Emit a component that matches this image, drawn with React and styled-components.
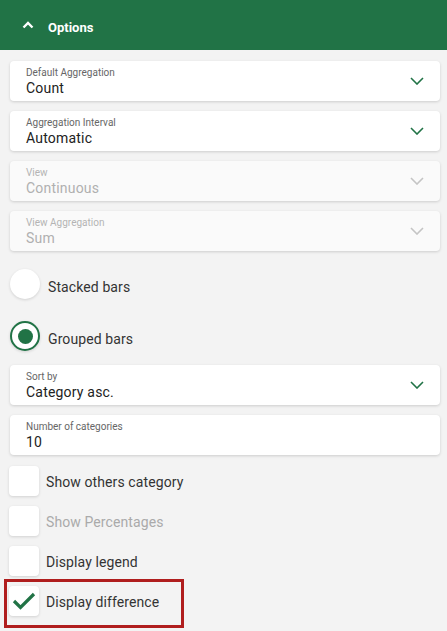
import React from 'react'
import styled, { createGlobalStyle } from 'styled-components'

const GlobalStyle = createGlobalStyle`
    html, body {
        margin: 0;
        padding: 0;
        background: #f3f3f3;
        font-family: Roboto, "Liberation Sans", sans-serif;
    }
`

const green = '#217346'

const selects = [
    { label: 'Default Aggregation', value: 'Count' },
    { label: 'Aggregation Interval', value: 'Automatic' },
    { label: 'View', value: 'Continuous', disabled: true },
    { label: 'View Aggregation', value: 'Sum', disabled: true }
]

const checks = [
    { label: 'Show others category' },
    { label: 'Show Percentages', disabled: true },
    { label: 'Display legend' },
    { label: 'Display difference', checked: true, highlight: true }
]

const ChevronDown = ({ color }) => (
    <svg width="14" height="8" viewBox="0 0 14 8">
        <path d="M1 1 L7 7 L13 1" fill="none" stroke={color} strokeWidth="1.6" />
    </svg>
)

const Select = ({ label, value, disabled, noArrow }) => (
    <Field disabled={disabled}>
        <FieldText>
            <FieldLabel disabled={disabled}>{label}</FieldLabel>
            <FieldValue disabled={disabled}>{value}</FieldValue>
        </FieldText>
        {!noArrow && <ChevronDown color={disabled ? '#c4c4c4' : green} />}
    </Field>
)

export default function App() {
    return (
        <Panel>
            <GlobalStyle />
            <Header>
                <svg width="12" height="8" viewBox="0 0 12 8">
                    <path d="M1.5 6.5 L6 2 L10.5 6.5" fill="none" stroke="#fff" strokeWidth="2.4" />
                </svg>
                <Title>Options</Title>
            </Header>
            <Body>
                <FieldGroup>
                    {selects.map((s) =>
                        <Select key={s.label} {...s} />
                    )}
                </FieldGroup>
                <RadioGroup>
                    <RadioRow>
                        <Radio />
                        <OptionText lower>Stacked bars</OptionText>
                    </RadioRow>
                    <RadioRow>
                        <Radio checked><RadioDot /></Radio>
                        <OptionText lower>Grouped bars</OptionText>
                    </RadioRow>
                </RadioGroup>
                <FieldGroup>
                    <Select label="Sort by" value="Category asc." />
                    <Select label="Number of categories" value="10" noArrow />
                </FieldGroup>
                <CheckGroup>
                    {checks.map((c) =>
                        <CheckRow key={c.label}>
                            <CheckBox>
                                {c.checked &&
                                    <svg width="24" height="20" viewBox="0 0 24 20">
                                        <path d="M2 10 L8.5 16.5 L22 3" fill="none" stroke={green} strokeWidth="3.2" />
                                    </svg>}
                            </CheckBox>
                            <OptionText disabled={c.disabled}>{c.label}</OptionText>
                            {c.highlight && <Highlight />}
                        </CheckRow>
                    )}
                </CheckGroup>
            </Body>
        </Panel>
    )
}

const Panel = styled.div`
    width: 447px;
    min-height: 631px;
    background: #f3f3f3;
`
const Header = styled.div`
    height: 50px;
    background: ${green};
    display: flex;
    align-items: center;
    padding-left: 22px;
    gap: 14px;
    box-sizing: border-box;
`
const Title = styled.div`
    color: #fff;
    font-weight: 700;
    font-size: 13px;
    padding-top: 4px;
`
const Body = styled.div`
    padding: 11px 7px 0 10px;
    display: flex;
    flex-direction: column;
`
const FieldGroup = styled.div`
    display: flex;
    flex-direction: column;
    gap: 10px;
`
const Field = styled.div`
    height: 40px;
    box-sizing: border-box;
    background: ${p => p.disabled ? '#fafafa' : '#fff'};
    border-radius: 4px;
    box-shadow: 0 1px 3px rgba(0,0,0,.16);
    display: flex;
    align-items: center;
    padding: 0 16px 0 16px;
`
const FieldText = styled.div`
    flex: 1;
    display: flex;
    flex-direction: column;
    padding-top: 1px;
`
const FieldLabel = styled.div`
    font-size: 10px;
    line-height: 13px;
    color: ${p => p.disabled ? '#b4b4b4' : '#666'};
`
const FieldValue = styled.div`
    font-size: 14px;
    line-height: 18px;
    color: ${p => p.disabled ? '#b0b0b0' : '#222'};
    letter-spacing: .2px;
`
const RadioGroup = styled.div`
    margin: 7px 0 3px;
    display: flex;
    flex-direction: column;
`
const RadioRow = styled.div`
    height: 52px;
    display: flex;
    align-items: center;
    gap: 8px;
`
const Radio = styled.div`
    width: 30px;
    height: 30px;
    box-sizing: border-box;
    border-radius: 50%;
    background: #fff;
    box-shadow: 0 1px 3px rgba(0,0,0,.14);
    border: ${p => p.checked ? `2px solid ${green}` : 'none'};
    display: flex;
    align-items: center;
    justify-content: center;
`
const RadioDot = styled.div`
    width: 15px;
    height: 15px;
    border-radius: 50%;
    background: ${green};
`
const OptionText = styled.div`
    font-size: 14px;
    color: ${p => p.disabled ? '#aaa' : '#333'};
    letter-spacing: .1px;
    padding-top: ${p => p.lower ? '5px' : '1px'};
`
const CheckGroup = styled.div`
    margin-top: 6px;
    margin-left: -1px;
    display: flex;
    flex-direction: column;
`
const CheckRow = styled.div`
    position: relative;
    height: 40px;
    display: flex;
    align-items: center;
    gap: 7px;
`
const CheckBox = styled.div`
    width: 30px;
    height: 30px;
    border-radius: 4px;
    background: #fff;
    box-shadow: 0 1px 3px rgba(0,0,0,.14);
    display: flex;
    align-items: center;
    justify-content: center;
`
// red annotation frame drawn over the last option
const Highlight = styled.span`
    position: absolute;
    left: -5px;
    top: -2px;
    width: 180px;
    height: 49px;
    box-sizing: border-box;
    border: 3px solid #b01e1e;
    pointer-events: none;
`
